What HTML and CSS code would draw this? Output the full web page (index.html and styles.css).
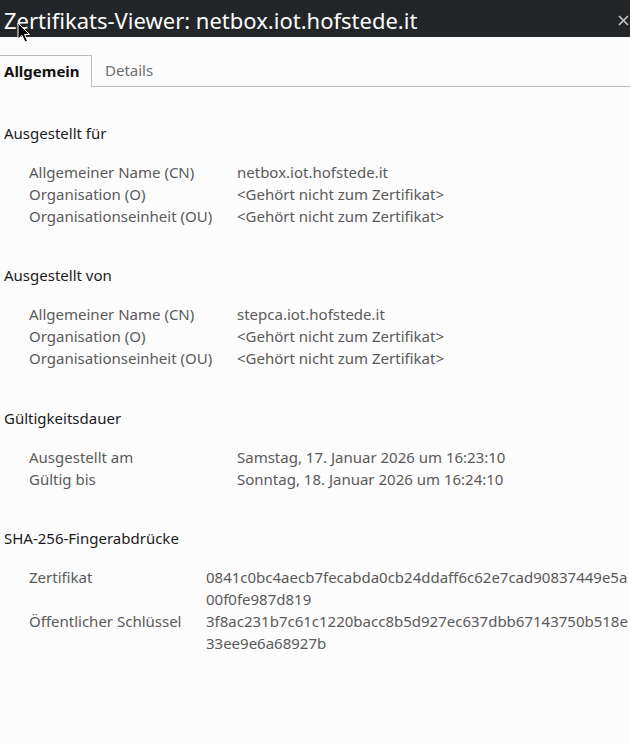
FILE: index.html
```html
<!DOCTYPE html>
<html lang="de">
<head>
<meta charset="utf-8">
<title>Zertifikats-Viewer</title>
<link rel="stylesheet" href="styles.css">
</head>
<body>
<div class="titlebar">
  <span class="title">Zertifikats-Viewer: netbox.iot.hofstede.it</span>
  <svg class="close" width="11" height="11" viewBox="0 0 11 11"><path d="M1 1L10 10M10 1L1 10" stroke="#c4c4c4" stroke-width="1.7" fill="none"/></svg>
  <svg class="cursor" width="14" height="22" viewBox="0 0 14 22"><path d="M1 1L1 17L5 13.5L8 20L10.5 19L7.5 12.5L12.5 12.5Z" fill="#000" stroke="#fff" stroke-width="1"/></svg>
</div>
<div class="tabs">
  <div class="tab active">Allgemein</div>
  <div class="tab">Details</div>
  <div class="tabfill"></div>
</div>
<main class="content">
  <section class="section">
    <h2 class="heading">Ausgestellt für</h2>
    <div class="grid">
      <div class="label">Allgemeiner Name (CN)</div><div class="value">netbox.iot.hofstede.it</div>
      <div class="label">Organisation (O)</div><div class="value">&lt;Gehört nicht zum Zertifikat&gt;</div>
      <div class="label">Organisationseinheit (OU)</div><div class="value">&lt;Gehört nicht zum Zertifikat&gt;</div>
    </div>
  </section>
  <section class="section">
    <h2 class="heading">Ausgestellt von</h2>
    <div class="grid">
      <div class="label">Allgemeiner Name (CN)</div><div class="value">stepca.iot.hofstede.it</div>
      <div class="label">Organisation (O)</div><div class="value">&lt;Gehört nicht zum Zertifikat&gt;</div>
      <div class="label">Organisationseinheit (OU)</div><div class="value">&lt;Gehört nicht zum Zertifikat&gt;</div>
    </div>
  </section>
  <section class="section">
    <h2 class="heading">Gültigkeitsdauer</h2>
    <div class="grid">
      <div class="label">Ausgestellt am</div><div class="value">Samstag, 17. Januar 2026 um 16:23:10</div>
      <div class="label">Gültig bis</div><div class="value">Sonntag, 18. Januar 2026 um 16:24:10</div>
    </div>
  </section>
  <section class="section">
    <h2 class="heading">SHA-256-Fingerabdrücke</h2>
    <div class="grid narrow">
      <div class="label">Zertifikat</div><div class="value hash"><span>0841c0bc4aecb7fecabda0cb24ddaff6c62e7cad90837449e5a</span><span>00f0fe987d819</span></div>
      <div class="label">Öffentlicher Schlüssel</div><div class="value hash"><span>3f8ac231b7c61c1220bacc8b5d927ec637dbb67143750b518e</span><span>33ee9e6a68927b</span></div>
    </div>
  </section>
</main>
</body>
</html>
```
FILE: styles.css
```css
html, body {
  margin: 0;
  padding: 0;
  background: #fcfcfc;
  font-family: "Noto Sans", "Open Sans", sans-serif;
  font-size: 15px;
  overflow: hidden;
}
.titlebar {
  position: relative;
  height: 37px;
  background: #232629;
  display: flex;
  align-items: center;
  padding-left: 4px;
}
.title {
  color: #fcfcfc;
  font-size: 22px;
  line-height: 37px;
  margin-top: 3px;
}
.close {
  position: absolute;
  right: 1px;
  top: 15px;
}
.cursor {
  position: absolute;
  left: 17px;
  top: 22px;
}
.tabs {
  display: flex;
  margin-top: 18px;
  height: 32px;
}
.tab {
  padding: 0 0 0 13px;
  line-height: 31px;
  color: #6e6e6e;
  border-bottom: 1px solid #bcbcbc;
}
.tab.active {
  padding-left: 4px;
  color: #111;
  font-weight: bold;
  border: 1px solid #bcbcbc;
  border-left: none;
  border-bottom: none;
  width: 92px;
  box-sizing: border-box;
}
.tabfill {
  flex: 1;
  border-bottom: 1px solid #bcbcbc;
}
.content {
  padding: 35px 0 0 0;
}
.section {
  margin-bottom: 37px;
}
.section:nth-child(2) {
  margin-bottom: 38px;
}
.heading {
  margin: 0 0 17px 4px;
  font-size: 15px;
  font-weight: normal;
  line-height: 22px;
  color: #1b1b1b;
}
.grid {
  display: grid;
  grid-template-columns: 208px 1fr;
  padding-left: 29px;
  line-height: 22px;
  color: #5a5a5a;
}
.grid.narrow {
  grid-template-columns: 177px 1fr;
}
.hash span {
  display: block;
  white-space: nowrap;
}
```
